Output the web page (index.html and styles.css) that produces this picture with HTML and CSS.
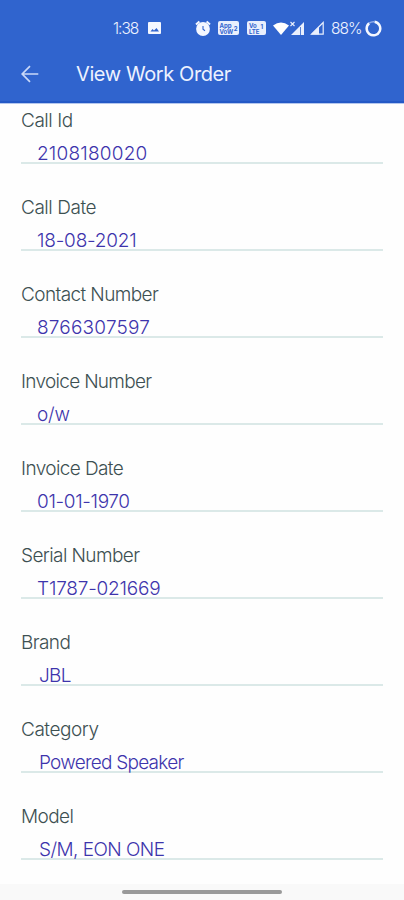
FILE: index.html
```html
<!DOCTYPE html>
<html lang="en">
<head>
  <meta charset="utf-8">
  <title>View Work Order</title>
  <link rel="stylesheet" href="styles.css">
</head>
<body>
  <header class="top">
    <div class="status">
      <span class="time">1:38</span>
      <svg class="icon-photo" width="13" height="12" viewBox="0 0 13 12">
        <rect width="13" height="12" rx="1" fill="#f4f7ff"/>
        <path d="M2.5 9.5 L4.5 7 L6 8.5 L8.5 6 L11 9.5Z" fill="#3064ce"/>
      </svg>
      <svg class="icon-alarm" width="16" height="17" viewBox="0 0 16 17">
        <circle cx="8" cy="9" r="6.9" fill="#f4f7ff"/>
        <path d="M1 4.4 L4.4 1.4 M15 4.4 L11.6 1.4" stroke="#f4f7ff" stroke-width="2"/>
        <path d="M8 6 V9.3 L10 10.8" stroke="#3064ce" stroke-width="1.1" fill="none"/>
      </svg>
      <svg class="icon-app" width="21" height="14" viewBox="0 0 21 14">
        <rect width="21" height="14" rx="2" fill="#e9effd"/>
        <text x="1.5" y="6.6" class="tiny">App</text>
        <text x="1.5" y="12.6" class="tiny">VoW</text>
        <text x="15.8" y="9.5" class="tiny">2</text>
      </svg>
      <svg class="icon-vo" width="19" height="14" viewBox="0 0 19 14">
        <rect width="19" height="14" rx="2" fill="#e9effd"/>
        <text x="2" y="6.6" class="tiny">Vo</text>
        <text x="2" y="12.6" class="tiny">LTE</text>
        <text x="13.5" y="8" class="tiny">1</text>
      </svg>
      <svg class="icon-wifi" width="16" height="13" viewBox="0 0 16 13">
        <path d="M0 3.6 Q8 -2.6 16 3.6 L8 13Z" fill="#fff"/>
      </svg>
      <svg class="icon-signal" width="15" height="15" viewBox="0 0 15 15">
        <path d="M0.5 1 L4.5 5 M4.5 1 L0.5 5" stroke="#e9effd" stroke-width="1.1"/>
        <path d="M1 14 L14 1 V14Z" fill="#e9effd"/>
        <path d="M10.5 6 V14" stroke="#3064ce" stroke-width="0.8"/>
      </svg>
      <svg class="icon-signal2" width="14" height="14" viewBox="0 0 14 14">
        <path d="M1.5 13.2 L13.2 1.5 V13.2Z" fill="none" stroke="#e9effd" stroke-width="1.2"/>
        <path d="M1 13.5 L9 5.5 V13.5Z" fill="#e9effd"/>
      </svg>
      <span class="percent">88%</span>
      <svg class="icon-battery" width="17" height="17" viewBox="0 0 17 17">
        <path d="M9.5 1.8 A6.8 6.8 0 1 1 4.2 3.2" fill="none" stroke="#f4f7ff" stroke-width="2.5"/>
        <path d="M4.2 3.2 A6.8 6.8 0 0 1 9.5 1.8" fill="none" stroke="#8facea" stroke-width="1.5"/>
      </svg>
    </div>
    <div class="bar">
      <svg class="back" width="18" height="18" viewBox="0 0 18 18">
        <path d="M17.3 9 H1.5 M9 1.2 L1.2 9 L9 16.8" fill="none" stroke="#c9d8f8" stroke-width="1.7"/>
      </svg>
      <h1 class="title">View Work Order</h1>
    </div>
  </header>

  <main class="form">
    <div class="field">
      <div class="label short">Call Id</div>
      <div class="value number">2108180020</div>
    </div>
    <div class="field">
      <div class="label short">Call Date</div>
      <div class="value number date">18-08-2021</div>
    </div>
    <div class="field">
      <div class="label">Contact Number</div>
      <div class="value number">8766307597</div>
    </div>
    <div class="field">
      <div class="label invoice">Invoice Number</div>
      <div class="value number date">o/w</div>
    </div>
    <div class="field">
      <div class="label">Invoice Date</div>
      <div class="value number invoice-date">01-01-1970</div>
    </div>
    <div class="field">
      <div class="label">Serial Number</div>
      <div class="value number date">T1787-021669</div>
    </div>
    <div class="field">
      <div class="label">Brand</div>
      <div class="value">JBL</div>
    </div>
    <div class="field">
      <div class="label short">Category</div>
      <div class="value category">Powered Speaker</div>
    </div>
    <div class="field">
      <div class="label">Model</div>
      <div class="value model">S/M, EON ONE</div>
    </div>
  </main>

  <footer class="nav">
    <div class="handle"></div>
  </footer>
</body>
</html>
```

FILE: styles.css
```css
* {
  box-sizing: border-box;
}
body {
  margin: 0;
  height: 900px;
  display: flex;
  flex-direction: column;
  overflow: hidden;
  background: #fefefe;
  font-family: Inter, "Liberation Sans", sans-serif;
  font-weight: 300;
}
.top {
  height: 103px;
  flex: none;
  background: #3064ce;
  border-bottom: 2px solid #2459c6;
  box-shadow: 0 1px 0 #b4c7ee;
  color: #edf2ff;
}
.status {
  display: flex;
  align-items: center;
  height: 46px;
  padding: 10px 0 0 113px;
  font-size: 15.5px;
}
.status svg {
  flex: none;
}
.time {
  width: 35px;
  letter-spacing: -1px;
}
.icon-alarm {
  margin-left: 34px;
}
.icon-app {
  margin-left: 7px;
}
.icon-vo {
  margin-left: 8px;
}
.icon-wifi {
  margin-left: 7px;
}
.icon-signal {
  margin-left: 1px;
}
.icon-signal2 {
  margin-left: 5px;
}
.percent {
  width: 34px;
  margin-left: 7px;
  letter-spacing: -1px;
}
.tiny {
  font-size: 6px;
  font-weight: 700;
  fill: #3064ce;
}
.bar {
  display: flex;
  align-items: center;
  height: 56px;
  padding-left: 21px;
}
.title {
  margin: 0 0 0 37px;
  font-size: 20px;
  font-weight: 400;
  letter-spacing: -0.4px;
}
.form {
  flex: 1;
  min-height: 0;
  padding: 0 21px 0 21px;
}
.field {
  height: 87px;
  padding-top: 6px;
}
.label {
  height: 24px;
  line-height: 24px;
  font-size: 19px;
  letter-spacing: -0.6px;
  color: #3d5052;
}
.label.short {
  letter-spacing: -0.45px;
}
.label.invoice {
  letter-spacing: -0.7px;
}
.value {
  height: 31px;
  padding: 9px 0 0 18px;
  border-bottom: 2px solid #dbe9e8;
  line-height: 24px;
  font-size: 19px;
  letter-spacing: -0.7px;
  color: #3d34ac;
}
.number {
  padding-left: 16px;
  letter-spacing: 0.2px;
}
.date {
  letter-spacing: -0.2px;
}
.invoice-date {
  letter-spacing: -0.35px;
}
.category {
  letter-spacing: -0.75px;
}
.model {
  letter-spacing: -0.55px;
}
.nav {
  display: flex;
  flex: none;
  justify-content: center;
  height: 16px;
  padding-top: 6px;
  background: #f9f9f9;
  z-index: 1;
}
.handle {
  width: 160px;
  height: 4px;
  border-radius: 2px;
  background: #999;
}
```
